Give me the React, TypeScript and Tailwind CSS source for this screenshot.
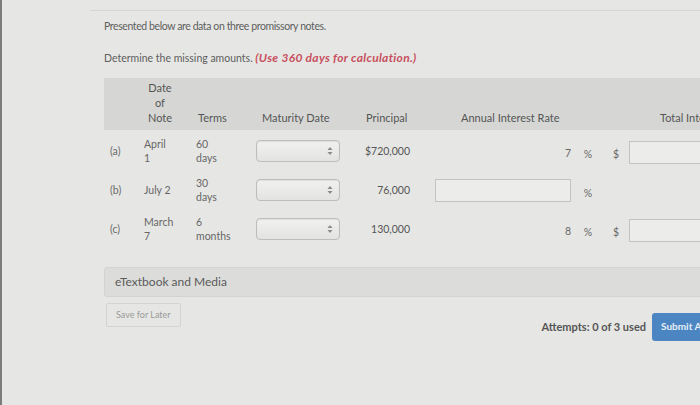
import React from "react";

const Sel = () => (
  <div className="w-[84px] h-[22px] rounded-[4px] border border-[#bdbdbb] bg-gradient-to-b from-[#f1f1ef] to-[#e3e3e1] flex items-center justify-end pr-[6px] shadow-[inset_0_1px_1px_rgba(0,0,0,0.08)]">
    <svg width="6" height="10" viewBox="0 0 6 10">
      <path d="M3 1 L5.5 4 L0.5 4 Z" fill="#8a8a8a" />
      <path d="M3 9 L5.5 6 L0.5 6 Z" fill="#8a8a8a" />
    </svg>
  </div>
);

const Box = ({ w }: { w: string }) => (
  <div className={`${w} h-[23px] border border-[#c2c4c1] bg-[#ecedeb]`} />
);

export default function App() {
  return (
    <div
      className="w-[700px] h-[405px] overflow-hidden bg-[#e6e7e4] flex text-[#666] relative"
      style={{ fontFamily: "Lato, 'Open Sans', sans-serif" }}
    >
      <div className="w-[2px] h-full bg-[#7d7d7d] shrink-0" />
      <div className="w-[698px] shrink-0 min-w-0 flex flex-col pl-[102px] pt-[10px] relative">
        <div className="absolute top-[10px] left-[88px] right-0 h-px bg-[#d6d7d4]" />
        <div className="text-[10.5px] tracking-[-0.4px] mt-[9px] text-[#5e5e5e] whitespace-nowrap">Presented below are data on three promissory notes.</div>
        <div className="text-[10.5px] mt-[14px] text-[#5e5e5e] whitespace-nowrap">
          Determine the missing amounts.{" "}
          <span className="italic font-bold text-[12px] tracking-[0.3px] text-[#c8505e]">(Use 360 days for calculation.)</span>
        </div>

        {/* header */}
        <div className="mt-[11px] h-[52px] w-[600px] bg-[#d6d7d4] flex items-end pb-[5px] text-[11px] text-[#555] leading-[15px] whitespace-nowrap overflow-hidden">
          <div className="w-[38px] shrink-0" />
          <div className="w-[36px] shrink-0 text-center">Date<br />of<br />Note</div>
          <div className="w-[20px] shrink-0" />
          <div className="w-[50px] shrink-0">Terms</div>
          <div className="w-[118px] shrink-0 pl-[14px]">Maturity Date</div>
          <div className="w-[95px] shrink-0">Principal</div>
          <div className="w-[199px] shrink-0">Annual Interest Rate</div>
          <div className="shrink-0">Total Interest</div>
        </div>

        {/* rows */}
        {[
          { l: "(a)", d: ["April", "1"], t: ["60", "days"], p: "$720,000", rate: "7", box: false, tot: true },
          { l: "(b)", d: ["July 2"], t: ["30", "days"], p: "76,000", rate: "", box: true, tot: false },
          { l: "(c)", d: ["March", "7"], t: ["6", "months"], p: "130,000", rate: "8", box: false, tot: true },
        ].map((r, i) => (
          <div key={i} className={`flex items-center h-[39px] text-[10.5px] leading-[14px] ${i === 0 ? "mt-[2px]" : ""}`}>
            <div className="w-[40px] shrink-0 pl-[6px] text-[#6a6a6a]">{r.l}</div>
            <div className="w-[52px] shrink-0">
              {r.d.map((x, k) => (
                <div key={k}>{x}</div>
              ))}
            </div>
            <div className="w-[60px] shrink-0">
              {r.t.map((x, k) => (
                <div key={k}>{x}</div>
              ))}
            </div>
            <div className="w-[102px] shrink-0">
              <Sel />
            </div>
            <div className="w-[52px] shrink-0 text-right text-[#555]">{r.p}</div>
            <div className="w-[25px] shrink-0" />
            <div className="w-[136px] shrink-0 flex justify-end">
              {r.box ? <Box w="w-[136px]" /> : <span className="pr-[0px] pt-[4px]">{r.rate}</span>}
            </div>
            <div className="w-[34px] shrink-0 text-center pt-[6px]">%</div>
            <div className="w-[22px] shrink-0 text-center pt-[5px]">{r.tot ? "$" : ""}</div>
            <div className="w-[80px] shrink-0 pl-[2px] pt-[3px]">{r.tot ? <Box w="w-[80px]" /> : null}</div>
          </div>
        ))}

        <div className="mt-[18px] h-[30px] w-[600px] rounded-[3px] border border-[#d3d4d1] bg-[#dcdddb] flex items-center pl-[10px] text-[12px] text-[#5a5a5a]">
          eTextbook and Media
        </div>

        <div className="flex items-start mt-[6px]">
          <div className="ml-[2px] h-[24px] px-[9px] border border-[#d3d4d1] rounded-[2px] flex items-center text-[9px] text-[#9a9a9a] whitespace-nowrap">
            Save for Later
          </div>
          <div className="flex-1 min-w-0 flex justify-end items-center mt-[10px]">
            <span className="text-[11px] font-bold text-[#555] mr-[6px] whitespace-nowrap">Attempts: 0 of 3 used</span>
            <div className="h-[28px] w-[60px] shrink-0 -mr-[12px] bg-[#4b86c2] rounded-[3px] flex items-center pl-[9px] text-[10px] font-bold text-[#e6eef7] whitespace-nowrap overflow-hidden">
              Submit Answer
            </div>
          </div>
        </div>
      </div>
    </div>
  );
}
